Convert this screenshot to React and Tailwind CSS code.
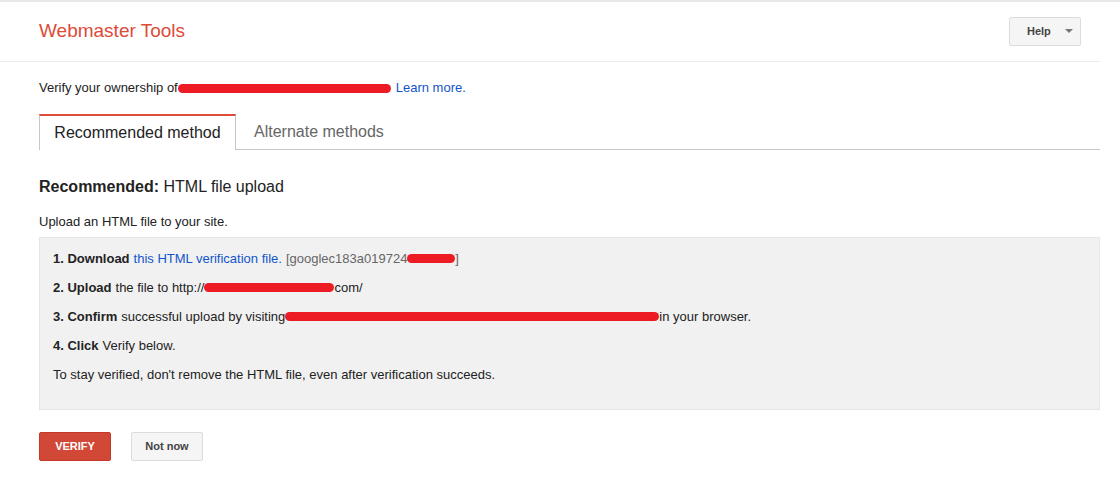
import React from 'react';

const font = { fontFamily: '"Liberation Sans", Arial, sans-serif' };

const Redact = ({ w }) => (
  <span className={`inline-block h-[9px] rounded-full bg-[#ed1c24] align-middle ${w}`} />
);

const App = () => {
  return (
    <div className="w-[1120px] h-[501px] bg-white text-[13px] text-[#222]" style={font}>
      <div className="h-[2px] bg-[#e8e8e8]" />
      <div className="w-[1100px] h-[60px] border-b border-[#ebebeb] flex items-center justify-between pl-[39px] pr-[19px]">
        <div className="text-[19px] text-[#dd4b39] -mt-[1px]">Webmaster Tools</div>
        <button className="w-[72px] h-[29px] -mt-[1px] rounded-[2px] border border-[#dcdcdc] bg-[#f5f5f5] flex items-center pl-[17px] text-[11px] font-bold text-[#444]">
          <span>Help</span>
          <span className="ml-[14px] w-0 h-0 border-l-[4px] border-r-[4px] border-t-[4px] border-l-transparent border-r-transparent border-t-[#777]" />
        </button>
      </div>

      <div className="w-[1100px] pl-[39px]">
        <div className="mt-[18px] h-[16px] flex items-center">
          <span>Verify your ownership of</span>
          <Redact w="w-[213px]" />
          <a className="ml-[5px] text-[#1155cc]">Learn more.</a>
        </div>

        <div className="mt-[18px] flex items-end border-b border-[#c6c6c6] h-[36px]">
          <div className="h-[36px] w-[197px] border-t-2 border-[#dd4b39] border-l border-r border-l-[#c6c6c6] border-r-[#c6c6c6] bg-white -mb-[1px] flex items-center justify-center text-[16px] text-[#222]">
            Recommended method
          </div>
          <div className="h-[35px] px-[18px] flex items-center text-[16px] text-[#666]">Alternate methods</div>
        </div>

        <div className="mt-[25px] text-[16px] text-[#222]">
          <span className="font-bold">Recommended:</span> HTML file upload
        </div>
        <div className="mt-[13px]">Upload an HTML file to your site.</div>

        <div className="mt-[5px] h-[173px] bg-[#f1f1f1] border border-[#e5e5e5] pl-[13px] pt-[13px] flex flex-col gap-[14px] leading-[15px]">
          <div className="flex items-center">
            <span className="font-bold">1. Download</span>
            <a className="ml-[4px] text-[#1155cc]">this HTML verification file.</a>
            <span className="ml-[4px] text-[#666]">[googlec183a019724</span>
            <Redact w="w-[48px]" />
            <span className="text-[#666]">]</span>
          </div>
          <div className="flex items-center">
            <span className="font-bold">2. Upload</span>
            <span className="ml-[4px]">the file to http://</span>
            <Redact w="w-[130px]" />
            <span>com/</span>
          </div>
          <div className="flex items-center">
            <span className="font-bold">3. Confirm</span>
            <span className="ml-[4px]">successful upload by visiting</span>
            <Redact w="w-[374px]" />
            <span>in your browser.</span>
          </div>
          <div className="flex items-center">
            <span className="font-bold">4. Click</span>
            <span className="ml-[4px]">Verify below.</span>
          </div>
          <div>To stay verified, don't remove the HTML file, even after verification succeeds.</div>
        </div>

        <div className="mt-[22px] flex gap-[20px]">
          <button className="w-[72px] h-[29px] rounded-[2px] bg-[#d14836] border border-[#c53727] text-white text-[11px] font-bold">
            VERIFY
          </button>
          <button className="w-[72px] h-[29px] rounded-[2px] bg-[#f5f5f5] border border-[#dcdcdc] text-[#444] text-[11px] font-bold">
            Not now
          </button>
        </div>
      </div>
    </div>
  );
};

export default App;
